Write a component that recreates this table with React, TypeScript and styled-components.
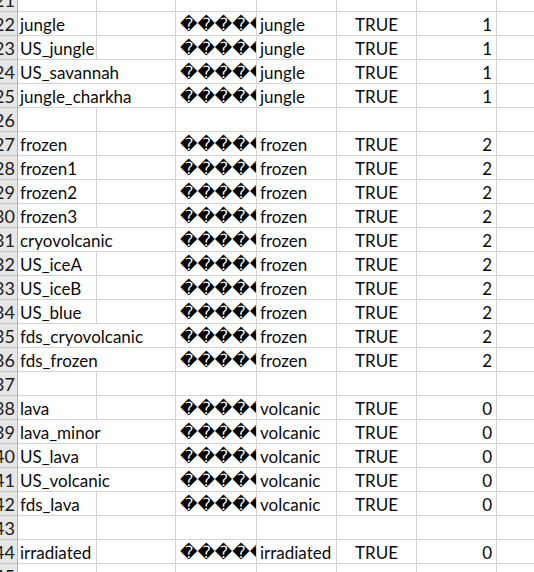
import React from "react";
import styled, { createGlobalStyle, css } from "styled-components";

const GlobalStyle = createGlobalStyle`
  html, body { margin: 0; padding: 0; background: #ffffff; overflow: hidden; }
  * { box-sizing: border-box; }
`;

const Viewport = styled.div`
  width: 534px;
  height: 572px;
  overflow: hidden;
  background: #ffffff;
`;

const Grid = styled.div`
  display: grid;
  grid-template-columns: 30px 79px 79px 81px 80px 80px 80px 80px;
  grid-auto-rows: 24px;
  margin: -12px 0 0 -12px;
  width: 589px;
  font-family: Lato, "Liberation Sans", sans-serif;
  font-size: 17px;
  color: #0a0a0a;
`;

const RowHeader = styled.div`
  display: flex;
  justify-content: flex-end;
  align-items: flex-end;
  overflow: hidden;
  padding: 0 2px 0 0;
  background: #e6e6e6;
  border-right: 1px solid #b4b4b4;
  border-bottom: 1px solid #c8c8c8;
  font-size: 18px;
  line-height: 21px;
  color: #1a1a1a;
`;

type Align = "left" | "center" | "right";

const Cell = styled.div<{ $align?: Align; $span?: number; $clip?: boolean; $pad?: number }>`
  display: flex;
  align-items: flex-end;
  white-space: nowrap;
  border-right: 1px solid #d4d4d4;
  border-bottom: 1px solid #d4d4d4;
  line-height: 20px;
  padding: 0 4px 0 ${(p) => p.$pad ?? 2}px;
  justify-content: ${(p) =>
    p.$align === "right" ? "flex-end" : p.$align === "center" ? "center" : "flex-start"};
  ${(p) => p.$span && css`grid-column: span ${p.$span};`}
  ${(p) => p.$clip && css`overflow: hidden; align-items: center;`}
`;

const Garbled = styled.span`
  font-family: "DejaVu Sans", sans-serif;
  font-size: 17px;
  line-height: 20px;
  color: #000000;
`;

type Row = { n: number; name?: string; wide?: boolean; kind?: string; value?: number };

const rows: Row[] = [
  { n: 21 },
  { n: 22, name: "jungle", kind: "jungle", value: 1 },
  { n: 23, name: "US_jungle", kind: "jungle", value: 1 },
  { n: 24, name: "US_savannah", wide: true, kind: "jungle", value: 1 },
  { n: 25, name: "jungle_charkha", wide: true, kind: "jungle", value: 1 },
  { n: 26 },
  { n: 27, name: "frozen", kind: "frozen", value: 2 },
  { n: 28, name: "frozen1", kind: "frozen", value: 2 },
  { n: 29, name: "frozen2", kind: "frozen", value: 2 },
  { n: 30, name: "frozen3", kind: "frozen", value: 2 },
  { n: 31, name: "cryovolcanic", wide: true, kind: "frozen", value: 2 },
  { n: 32, name: "US_iceA", kind: "frozen", value: 2 },
  { n: 33, name: "US_iceB", kind: "frozen", value: 2 },
  { n: 34, name: "US_blue", kind: "frozen", value: 2 },
  { n: 35, name: "fds_cryovolcanic", wide: true, kind: "frozen", value: 2 },
  { n: 36, name: "fds_frozen", wide: true, kind: "frozen", value: 2 },
  { n: 37 },
  { n: 38, name: "lava", kind: "volcanic", value: 0 },
  { n: 39, name: "lava_minor", wide: true, kind: "volcanic", value: 0 },
  { n: 40, name: "US_lava", kind: "volcanic", value: 0 },
  { n: 41, name: "US_volcanic", wide: true, kind: "volcanic", value: 0 },
  { n: 42, name: "fds_lava", kind: "volcanic", value: 0 },
  { n: 43 },
  { n: 44, name: "irradiated", kind: "irradiated", value: 0 },
  { n: 45 },
];

const GARBLED = "\uFFFD".repeat(8);

function SheetRow({ row }: { row: Row }) {
  const filled = row.name !== undefined;
  return (
    <>
      <RowHeader>{row.n}</RowHeader>
      {row.wide ? (
        <Cell $span={2}>{row.name}</Cell>
      ) : (
        <>
          <Cell>{row.name}</Cell>
          <Cell />
        </>
      )}
      <Cell $clip $pad={4}>{filled && <Garbled>{GARBLED}</Garbled>}</Cell>
      <Cell $pad={3}>{row.kind}</Cell>
      <Cell $align="center" $pad={4}>{filled ? "TRUE" : ""}</Cell>
      <Cell $align="right">{filled ? row.value : ""}</Cell>
      <Cell />
    </>
  );
}

export default function App() {
  return (
    <>
      <GlobalStyle />
      <Viewport>
        <Grid>
          {rows.map((r) => (
            <SheetRow key={r.n} row={r} />
          ))}
        </Grid>
      </Viewport>
    </>
  );
}
